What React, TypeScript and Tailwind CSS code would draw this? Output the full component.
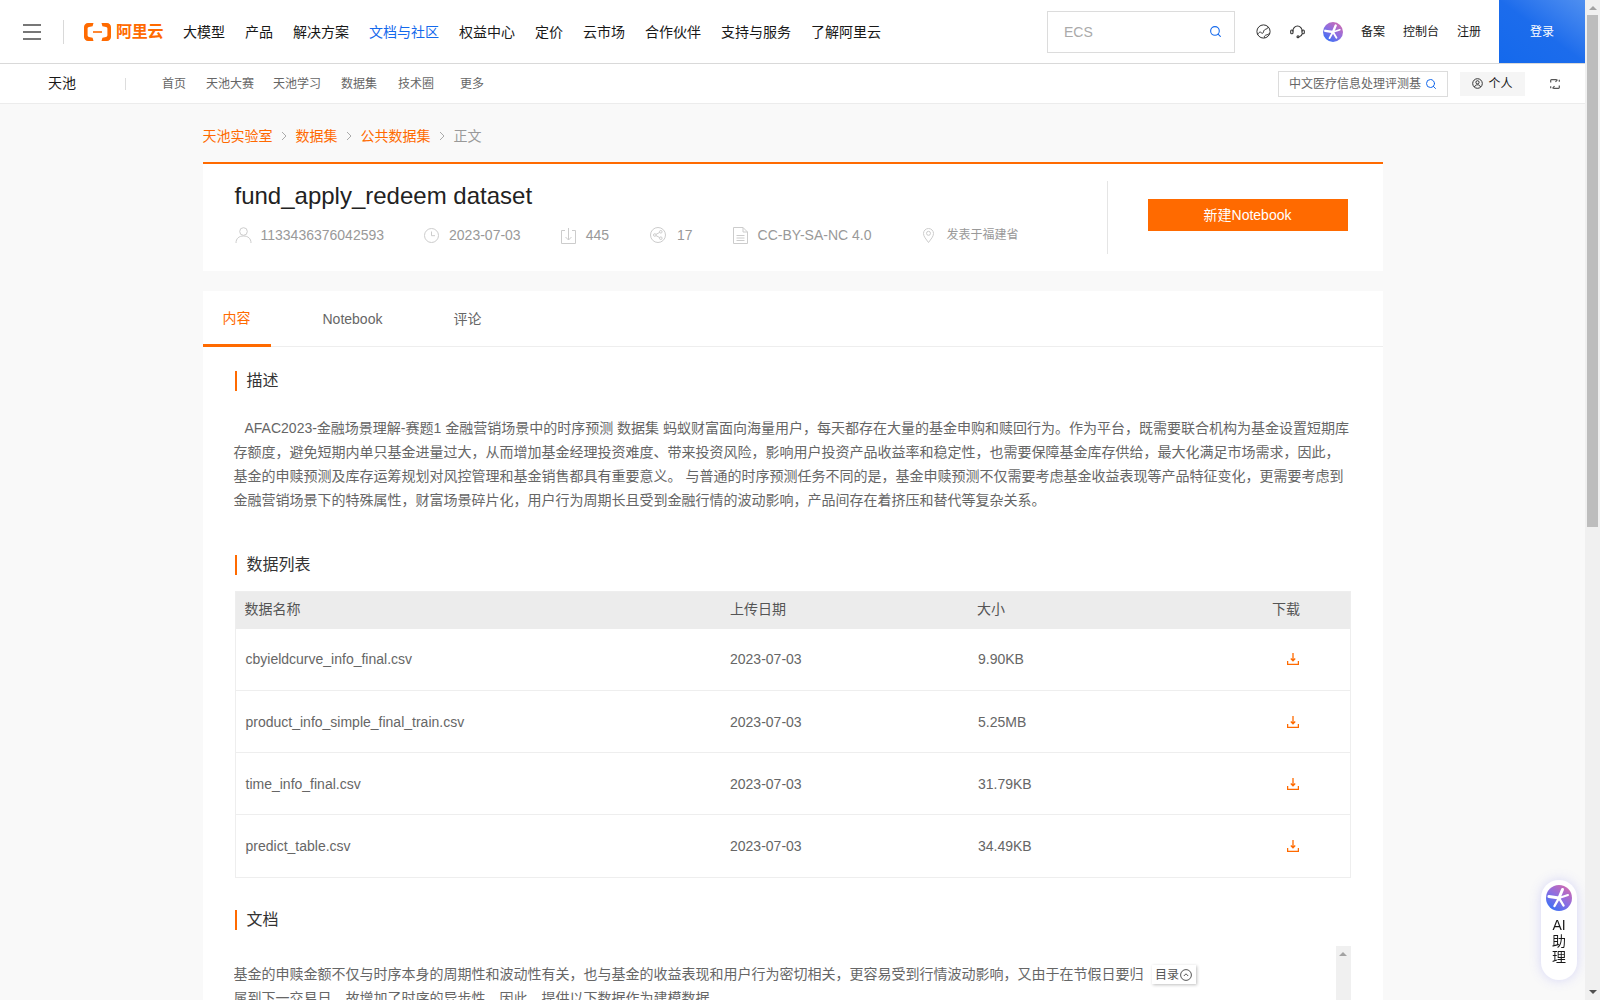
import { Search } from "lucide-react";

const mainNav = ["大模型", "产品", "解决方案", "文档与社区", "权益中心", "定价", "云市场", "合作伙伴", "支持与服务", "了解阿里云"];
const subNav = [
  { label: "首页", cls: "ml-[36px]" },
  { label: "天池大赛", cls: "ml-5" },
  { label: "天池学习", cls: "ml-[19px]" },
  { label: "数据集", cls: "ml-5" },
  { label: "技术圈", cls: "ml-[21px]" },
  { label: "更多", cls: "ml-[26px]" },
];
const files = [
  { name: "cbyieldcurve_info_final.csv", date: "2023-07-03", size: "9.90KB" },
  { name: "product_info_simple_final_train.csv", date: "2023-07-03", size: "5.25MB" },
  { name: "time_info_final.csv", date: "2023-07-03", size: "31.79KB" },
  { name: "predict_table.csv", date: "2023-07-03", size: "34.49KB" },
];

function AiLogo({ size }: { size: number }) {
  const id = `ai-grad-${size}`;
  return (
    <svg width={size} height={size} viewBox="0 0 26 26">
      <defs>
        <linearGradient id={id} x1="0.85" y1="0.05" x2="0.2" y2="0.95">
          <stop offset="0" stopColor="#d06ab0" />
          <stop offset="0.5" stopColor="#8f6ee0" />
          <stop offset="1" stopColor="#3a70f5" />
        </linearGradient>
      </defs>
      <circle cx="13" cy="13" r="13" fill={`url(#${id})`} />
      <g stroke="#fff" strokeLinecap="round" fill="none">
        <path d="M13 13 L16.500 4.500" strokeWidth="3" />
        <path d="M13 13 L3 11.500" strokeWidth="3.200" />
        <path d="M13 13 L22 10" strokeWidth="2" />
        <path d="M13 13 L8.500 21" strokeWidth="2.400" />
        <path d="M13 13 L17.500 20.500" strokeWidth="2.400" />
      </g>
    </svg>
  );
}

function Logo() {
  return (
    <div className="ml-5 flex items-center">
      <svg width="27" height="18" viewBox="0 0 27 18" fill="#ff6a00">
        <path d="M9.500 0H4C1.800 0 0 1.800 0 4v10c0 2.200 1.800 4 4 4h5.500l-.9-3.200-3.600-.8c-.9-.2-1.400-.9-1.400-1.700V5.700c0-.8.5-1.500 1.400-1.700l3.600-.8z" />
        <path d="M17.500 0H23c2.200 0 4 1.800 4 4v10c0 2.200-1.800 4-4 4h-5.500l.9-3.200 3.600-.8c.9-.2 1.400-.9 1.400-1.700V5.700c0-.8-.5-1.500-1.400-1.700l-3.600-.8z" />
        <rect x="9" y="8.200" width="9" height="1.600" />
      </svg>
      <span className="ml-[5px] text-base leading-5 font-bold tracking-[-0.3px] text-[#ff6a00]">阿里云</span>
    </div>
  );
}

function TopBar() {
  return (
    <header className="flex h-16 items-center border-b border-[#d9d9d9] bg-white">
      <svg className="ml-[23px]" width="18" height="16" viewBox="0 0 18 16" fill="#777">
        <rect width="18" height="2" />
        <rect y="7" width="18" height="2" />
        <rect y="14" width="18" height="2" />
      </svg>
      <div className="ml-[22px] h-6 w-px bg-[#d9d9d9]" />
      <Logo />
      <nav className="ml-5 flex gap-5 text-sm text-[#181818]">
        {mainNav.map((n) => (
          <span key={n} className={n === "文档与社区" ? "text-[#1469ec]" : ""}>{n}</span>
        ))}
      </nav>
      <div className="ml-auto flex h-[42px] w-[188px] items-center justify-between border border-[#dcdcdc] pr-3 pl-4 text-sm text-[#aaa]">
        ECS
        <Search size={13} className="text-[#1469ec]" />
      </div>
      <svg className="ml-[21px]" width="15" height="15" viewBox="0 0 15 15" fill="none" stroke="#333" strokeWidth="1">
        <circle cx="7.500" cy="7.500" r="6.600" />
        <path d="M1.500 10.800C2.800 8.200 4.200 7.400 5.400 8.800c.9 1 1.800.5 2.100-1 .3-1.700 1.300-2.300 2.600-2.700 1.200-.4 1.900-1 2.300-2.200" />
        <path d="M8.300 13.800c-.3-1.600.7-2.500 1.900-2.800 1.300-.4 2.400-.5 3.300-1.700" />
      </svg>
      <svg className="ml-[19px]" width="15" height="15" viewBox="0 0 15 15" fill="none" stroke="#333" strokeWidth="1.100">
        <path d="M2.800 7.500C2.800 4.500 4.800 2 7.500 2s4.700 2.500 4.700 5.500" />
        <rect x="0.700" y="6" width="2.300" height="3.800" rx="1.100" />
        <rect x="12" y="6" width="2.300" height="3.800" rx="1.100" />
        <path d="M12.200 10c-.5 1.500-1.500 2.400-3 2.700" />
        <circle cx="8" cy="12.800" r="1" />
      </svg>
      <div className="ml-[18px] flex">
        <AiLogo size={20} />
      </div>
      <div className="ml-[18px] flex gap-[18px] text-xs text-[#181818]">
        <span>备案</span>
        <span>控制台</span>
        <span>注册</span>
      </div>
      <div className="ml-[18px] flex h-full w-[86px] items-center justify-center bg-gradient-to-bl from-[#4f8ff0] via-[#1c6cec] to-[#1469ec] text-xs text-white">
        登录
      </div>
    </header>
  );
}

function SubBar() {
  return (
    <div className="flex h-10 items-center border-b border-[#ececec] bg-white pr-[25px]">
      <span className="ml-12 pb-0.5 text-sm text-[#181818]">天池</span>
      <div className="ml-[49px] h-3 w-px bg-[#ddd]" />
      <div className="flex text-xs text-[#666]">
        {subNav.map((n) => (
          <span key={n.label} className={n.cls}>{n.label}</span>
        ))}
      </div>
      <div className="ml-auto flex h-[26px] w-[170px] items-center border border-[#dcdcdc] pl-[10px] text-xs text-[#666]">
        <span className="w-[133px] overflow-hidden whitespace-nowrap">中文医疗信息处理评测基</span>
        <Search size={12} className="ml-[3px] shrink-0 text-[#1469ec]" />
      </div>
      <div className="ml-3 flex h-6 w-[65px] items-center justify-center gap-[5px] bg-[#f5f5f5] text-xs text-[#181818]">
        <svg width="11" height="11" viewBox="0 0 11 11" fill="none" stroke="#333">
          <circle cx="5.500" cy="5.500" r="4.800" />
          <circle cx="5.500" cy="4.300" r="1.600" />
          <path d="M2.500 9c.5-1.600 1.500-2.200 3-2.200s2.500.6 3 2.200" />
        </svg>
        个人
      </div>
      <svg className="ml-[25px]" width="10" height="10" viewBox="0 0 10 10" fill="none" stroke="#555" strokeWidth="1.200">
        <path d="M.7 3.500V1.500c0-.5.3-.8.8-.8h5.300" />
        <path d="M5.500 2.800L7.500.7" />
        <path d="M9.300 6.500v2c0 .5-.3.8-.8.8H3.200" />
        <path d="M4.500 7.200L2.500 9.300" />
        <path d="M9.300.7v2M.7 7.300v2" />
      </svg>
    </div>
  );
}

function Chevron() {
  return (
    <svg width="6" height="10" viewBox="0 0 6 10" fill="none" stroke="#aaa">
      <path d="M1 1l4 4-4 4" />
    </svg>
  );
}

function Breadcrumb() {
  return (
    <div className="flex h-[58px] items-center pt-[6px] text-sm text-[#ff6a00]">
      <span>天池实验室</span>
      <span className="mx-[8.5px]"><Chevron /></span>
      <span>数据集</span>
      <span className="mx-[8.5px]"><Chevron /></span>
      <span>公共数据集</span>
      <span className="mx-[8.5px]"><Chevron /></span>
      <span className="text-[#999]">正文</span>
    </div>
  );
}

function MetaItem({ icon, text, cls, small }: { icon: React.ReactNode; text: string; cls?: string; small?: boolean }) {
  return (
    <div className={`flex items-center ${cls ?? "gap-[10px]"}`}>
      {icon}
      <span className={small ? "text-xs text-[#999]" : "text-sm text-[#999]"}>{text}</span>
    </div>
  );
}

function TitleCard() {
  const s = { fill: "none", stroke: "#ccc" };
  return (
    <div className="flex h-[109px] border-t-2 border-[#ff6a00] bg-white">
      <div className="flex-1 pt-4 pl-8">
        <h1 className="text-2xl leading-8 text-[#222]">fund_apply_redeem dataset</h1>
        <div className="mt-[13px] flex h-5 items-center gap-10">
          <MetaItem
            text="1133436376042593"
            cls="gap-[9px]"
            icon={
              <svg width="17" height="16" viewBox="0 0 17 16" {...s}>
                <circle cx="8.500" cy="4.500" r="3.800" />
                <path d="M1 16c0-4.500 3-7 7.500-7S16 11.500 16 16" />
              </svg>
            }
          />
          <MetaItem
            text="2023-07-03"
            icon={
              <svg width="15" height="15" viewBox="0 0 15 15" {...s}>
                <circle cx="7.500" cy="7.500" r="7" />
                <path d="M7.500 3.500v4.200h3.500" />
              </svg>
            }
          />
          <MetaItem
            text="445"
            icon={
              <svg width="15" height="17" viewBox="0 0 15 17" {...s}>
                <path d="M4 3.500H.5v13h14v-13H11" />
                <path d="M7.500 1v12M4.500 10l3 3 3-3" />
              </svg>
            }
          />
          <MetaItem
            text="17"
            cls="ml-px gap-[11px]"
            icon={
              <svg width="16" height="16" viewBox="0 0 16 16" {...s}>
                <circle cx="8" cy="8" r="7.500" />
                <circle cx="4.800" cy="8" r="1.300" />
                <circle cx="10.800" cy="4.800" r="1.300" />
                <circle cx="10.800" cy="11.200" r="1.300" />
                <path d="M6 7.400l3.700-2M6 8.600l3.700 2" />
              </svg>
            }
          />
          <MetaItem
            text="CC-BY-SA-NC 4.0"
            icon={
              <svg width="15" height="17" viewBox="0 0 15 17" {...s}>
                <path d="M.5.500h9.500l4.500 4.500v11.500H.5z" />
                <path d="M10 .5V5h4.500M3.500 8.500h8M3.500 11h8M3.500 13.500h8" />
              </svg>
            }
          />
          <MetaItem
            small
            text="发表于福建省"
            cls="ml-3 gap-3"
            icon={
              <svg width="11" height="15" viewBox="0 0 11 15" {...s}>
                <path d="M5.500 14.500C3 11 .5 8.500.5 5.500a5 5 0 0 1 10 0c0 3-2.500 5.500-5 9z" />
                <circle cx="5.500" cy="5.300" r="2" />
              </svg>
            }
          />
        </div>
      </div>
      <div className="mt-[17px] h-[73px] w-[276px] border-l border-[#e5e5e5] pt-[18px] pl-[40px]">
        <button className="h-8 w-[200px] bg-[#ff6a00] text-sm text-white">新建Notebook</button>
      </div>
    </div>
  );
}

function Tabs() {
  return (
    <div className="flex h-14 gap-8 border-b border-[#eee] text-sm text-[#666]">
      <div className="-mb-px flex h-14 items-center border-b-[3px] border-[#ff6a00] px-5 text-[#ff6a00]">内容</div>
      <div className="flex items-center px-5">Notebook</div>
      <div className="-ml-px flex items-center px-5">评论</div>
    </div>
  );
}

function SectionTitle({ children, cls }: { children: React.ReactNode; cls: string }) {
  return (
    <h2 className={`${cls} border-l-2 border-[#ff6a00] pl-[10px] text-base leading-5 text-[#333]`}>{children}</h2>
  );
}

function DataTable() {
  return (
    <table className="mt-4 w-full table-fixed border-collapse border border-[#eee] text-left text-sm text-[#666]">
      <colgroup>
        <col className="w-[485px]" />
        <col className="w-[247px]" />
        <col className="w-[295px]" />
        <col />
      </colgroup>
      <thead>
        <tr className="h-[37px] bg-[#ececec] text-[#555]">
          <th className="pb-0.5 pl-[9px] font-normal">数据名称</th>
          <th className="pb-0.5 pl-[10px] font-normal">上传日期</th>
          <th className="pb-0.5 pl-[10px] font-normal">大小</th>
          <th className="pb-0.5 pl-[10px] font-normal">下载</th>
        </tr>
      </thead>
      <tbody>
        {files.map((f) => (
          <tr key={f.name} className="h-[62px] border-b border-[#eee] last:h-[63px]">
            <td className="pl-[10px]">{f.name}</td>
            <td className="pl-[10px]">{f.date}</td>
            <td className="pl-[11px]">{f.size}</td>
            <td className="pl-[25px]">
              <svg width="12" height="12" viewBox="0 0 12 12" fill="none" stroke="#ff6a00" strokeWidth="1.300">
                <path d="M6 0v7.500M3.800 5.500L6 7.800l2.200-2.300M.6 8v3.300h10.800V8" />
              </svg>
            </td>
          </tr>
        ))}
      </tbody>
    </table>
  );
}

function DocBox() {
  return (
    <div className="relative mt-4 -ml-px h-[900px] overflow-hidden text-sm leading-6 text-[#666]">
      <p className="w-[914px] pt-4">
        基金的申赎金额不仅与时序本身的周期性和波动性有关，也与基金的收益表现和用户行为密切相关，更容易受到行情波动影响，又由于在节假日要归属到下一交易日，故增加了时序的异步性。因此，提供以下数据作为建模数据。
      </p>
      <div className="absolute top-[19px] left-[918px] flex h-[19px] w-11 items-center justify-center gap-px bg-white text-xs text-[#555] shadow-[1px_1px_3px_rgba(0,0,0,0.25)]">
        目录
        <svg width="12" height="12" viewBox="0 0 12 12" fill="none" stroke="#555">
          <circle cx="6" cy="6" r="5.400" />
          <path d="M3.800 7l2.200-2.200L8.200 7" />
        </svg>
      </div>
      <div className="absolute top-0 right-0 bottom-0 flex w-[15px] justify-center bg-[#f0f0f0] pt-[6px]">
        <div className="h-0 w-0 border-x-[4px] border-b-[4px] border-x-transparent border-b-[#a3a3a3]" />
      </div>
    </div>
  );
}

function AiButton() {
  return (
    <div className="fixed right-[23px] bottom-5 flex h-[100px] w-9 flex-col items-center rounded-full bg-white pt-[5px] text-sm leading-4 text-[#181818] shadow-[0_0_12px_rgba(110,110,240,0.25)]">
      <AiLogo size={26} />
      <span className="mt-[6px]">AI</span>
      <span>助</span>
      <span>理</span>
    </div>
  );
}

// the browser hides its own scrollbar in the screenshot, so it is drawn here
function PageScrollbar() {
  return (
    <div className="fixed top-0 right-0 bottom-0 flex w-[15px] flex-col items-center bg-[#f0f0f0]">
      <div className="mt-[6px] h-0 w-0 border-x-[4px] border-b-[4px] border-x-transparent border-b-[#a3a3a3]" />
      <div className="mt-[5px] h-[512px] w-[11px] bg-[#bdbdbd]" />
      <div className="mt-auto mb-[6px] h-0 w-0 border-x-[4px] border-t-[4px] border-x-transparent border-t-[#505050]" />
    </div>
  );
}

export default function App() {
  return (
    <div className="min-h-[1895px] bg-[#f9f9f9] pr-[15px] [font-family:'Liberation_Sans','Noto_Sans_CJK_SC',sans-serif]">
      <TopBar />
      <SubBar />
      <main className="mx-auto w-[1180px]">
        <Breadcrumb />
        <TitleCard />
        <section className="mt-5 bg-white">
          <Tabs />
          <div className="px-8 pt-6 pb-[49px]">
            <SectionTitle cls="">描述</SectionTitle>
            <p className="mt-[25px] -ml-px text-sm leading-6 text-[#666]">
              <span className="inline-block w-[11px]" />AFAC2023-金融场景理解-赛题1 金融营销场景中的时序预测 数据集 蚂蚁财富面向海量用户，每天都存在大量的基金申购和赎回行为。作为平台，既需要联合机构为基金设置短期库存额度，避免短期内单只基金进量过大，从而增加基金经理投资难度、带来投资风险，影响用户投资产品收益率和稳定性，也需要保障基金库存供给，最大化满足市场需求，因此，基金的申赎预测及库存运筹规划对风控管理和基金销售都具有重要意义。 与普通的时序预测任务不同的是，基金申赎预测不仅需要考虑基金收益表现等产品特征变化，更需要考虑到金融营销场景下的特殊属性，财富场景碎片化，用户行为周期长且受到金融行情的波动影响，产品间存在着挤压和替代等复杂关系。
            </p>
            <SectionTitle cls="mt-[43px]">数据列表</SectionTitle>
            <DataTable />
            <SectionTitle cls="mt-8">文档</SectionTitle>
            <DocBox />
          </div>
        </section>
      </main>
      <AiButton />
      <PageScrollbar />
    </div>
  );
}
